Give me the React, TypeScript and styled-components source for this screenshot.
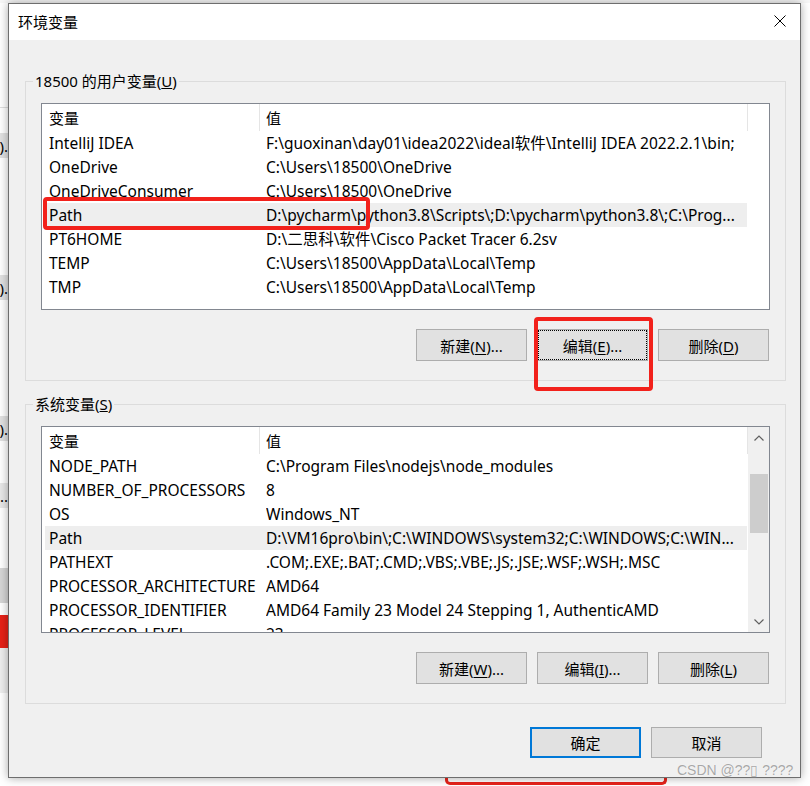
import styled, { createGlobalStyle } from "styled-components";

const GlobalStyle = createGlobalStyle`
  body {
    margin: 0;
    background: #ffffff;
  }
  * {
    box-sizing: border-box;
  }
`;

const uiFont = `"Noto Sans", "Noto Sans CJK SC", sans-serif`;

const Screen = styled.div`
  position: relative;
  width: 810px;
  height: 786px;
  overflow: hidden;
  background: #ffffff;
  display: flex;
  flex-direction: column;
  font-family: ${uiFont};
  font-size: 15px;
  color: #000;
`;

const TopStrip = styled.div`
  height: 3px;
  flex-shrink: 0;
  background: #f7f7f7;
`;

const Middle = styled.div`
  display: flex;
  height: 775px;
  flex-shrink: 0;
`;

const LeftStrip = styled.div`
  width: 8px;
  display: flex;
  flex-direction: column;
  overflow: hidden;
`;

const Band = styled.div<{ $h: number; $bg: string }>`
  height: ${(p) => p.$h}px;
  flex-shrink: 0;
  background: ${(p) => p.$bg};
  display: flex;
  align-items: center;
  justify-content: flex-end;
  white-space: nowrap;
  font-size: 15px;
`;

const RightStrip = styled.div`
  flex: 1;
  background: #ffffff;
`;

const BottomStrip = styled.div`
  height: 8px;
  flex-shrink: 0;
  display: flex;
`;

const RedMark = styled.div`
  margin-left: 445px;
  width: 222px;
  height: 7px;
  border: 3px solid #e8241c;
  border-top: none;
  border-radius: 0 0 5px 5px;
`;

const Dialog = styled.div`
  width: 793px;
  height: 775px;
  border: 1px solid #6e6e6e;
  background: #f0f0f0;
  display: flex;
  flex-direction: column;
  box-shadow: 0 0 9px rgba(0, 0, 0, 0.35);
  position: relative;
  z-index: 1;
`;

const TitleBar = styled.div`
  height: 36px;
  background: #ffffff;
  display: flex;
  align-items: center;
  justify-content: space-between;
  padding: 0 7px 2px 9px;
`;

const Title = styled.span`
  font-size: 15px;
`;

const CloseButton = styled.div`
  width: 26px;
  height: 26px;
  display: flex;
  align-items: center;
  justify-content: center;
`;

const Body = styled.div`
  flex: 1;
  display: flex;
  flex-direction: column;
  padding: 31px 14px 0 16px;
`;

const Group = styled.fieldset<{ $gap?: number }>`
  margin: ${(p) => p.$gap ?? 0}px 0 0 0;
  padding: 12px 15px 19px 15px;
  border: 1px solid #dcdcdc;
  min-width: 0;
  display: flex;
  flex-direction: column;
`;

const Legend = styled.legend`
  margin-left: -8px;
  padding: 0 2px;
  line-height: 20px;
  height: 20px;
  font-size: 15px;
`;

const ListBox = styled.div`
  height: 207px;
  border: 1px solid #828790;
  background: #ffffff;
  display: flex;
  overflow: hidden;
  font-size: 15.5px;
`;

const ListContent = styled.div`
  flex: 1;
  padding-left: 3px;
  overflow: hidden;
`;

const HeaderRow = styled.div`
  display: flex;
  height: 27px;
  align-items: center;
`;

const HeaderCell = styled.div<{ $w?: number; $pad: number }>`
  ${(p) => (p.$w ? `width: ${p.$w}px;` : "flex: 1;")}
  height: 100%;
  display: flex;
  align-items: center;
  padding-left: ${(p) => p.$pad}px;
  border-right: 1px solid #e5e5e5;
  font-size: 15px;
`;

const Row = styled.div<{ $selected?: boolean }>`
  display: flex;
  width: 702px;
  height: 24px;
  line-height: 24px;
  background: ${(p) => (p.$selected ? "#eeeeee" : "transparent")};
  white-space: nowrap;
`;

const NameCell = styled.div`
  width: 221px;
  padding-left: 4px;
  overflow: hidden;
`;

const ValueCell = styled.div`
  flex: 1;
  overflow: hidden;
  text-overflow: ellipsis;
`;

const ScrollBar = styled.div`
  width: 21px;
  background: #f0f0f0;
  display: flex;
  flex-direction: column;
  align-items: center;
`;

const ScrollArrow = styled.div`
  height: 21px;
  width: 100%;
  display: flex;
  align-items: center;
  justify-content: center;
`;

const ScrollTrack = styled.div`
  flex: 1;
  width: 100%;
  display: flex;
  flex-direction: column;
  align-items: center;
`;

const Thumb = styled.div<{ $top: number; $h: number }>`
  margin-top: ${(p) => p.$top}px;
  height: ${(p) => p.$h}px;
  width: 18px;
  background: #cdcdcd;
`;

const ButtonRow = styled.div<{ $top: number; $right?: number }>`
  display: flex;
  justify-content: flex-end;
  gap: 10px;
  margin-top: ${(p) => p.$top}px;
  padding-right: ${(p) => p.$right ?? 0}px;
`;

const Button = styled.div<{ $focused?: boolean; $default?: boolean; $h?: number }>`
  width: 111px;
  height: ${(p) => p.$h ?? 32}px;
  background: #e1e1e1;
  border: ${(p) => (p.$default ? "2px solid #0078d7" : "1px solid #adadad")};
  display: flex;
  align-items: center;
  justify-content: center;
  font-size: 15px;
  ${(p) => (p.$focused ? "outline: 1px dotted #000; outline-offset: -2px;" : "")}
  u {
    text-decoration-thickness: 1px;
    text-underline-offset: 2px;
  }
`;

const Annotation = styled.div<{ $x: number; $y: number; $w: number; $h: number }>`
  position: absolute;
  left: ${(p) => p.$x}px;
  top: ${(p) => p.$y}px;
  width: ${(p) => p.$w}px;
  height: ${(p) => p.$h}px;
  border: 4px solid #f2211b;
  border-radius: 4px;
  z-index: 2;
`;

const Watermark = styled.div`
  position: absolute;
  left: 677px;
  top: 762px;
  z-index: 3;
  font-family: "Liberation Sans", Arial, sans-serif;
  font-size: 14px;
  color: rgba(140, 140, 140, 0.75);
  white-space: nowrap;
  text-shadow: 0 0 1px rgba(255, 255, 255, 0.9);
`;

type Item = [string, string];

const userVars: Item[] = [
  ["IntelliJ IDEA", "F:\\guoxinan\\day01\\idea2022\\ideal软件\\IntelliJ IDEA 2022.2.1\\bin;"],
  ["OneDrive", "C:\\Users\\18500\\OneDrive"],
  ["OneDriveConsumer", "C:\\Users\\18500\\OneDrive"],
  ["Path", "D:\\pycharm\\python3.8\\Scripts\\;D:\\pycharm\\python3.8\\;C:\\Prog..."],
  ["PT6HOME", "D:\\二思科\\软件\\Cisco Packet Tracer 6.2sv"],
  ["TEMP", "C:\\Users\\18500\\AppData\\Local\\Temp"],
  ["TMP", "C:\\Users\\18500\\AppData\\Local\\Temp"],
];

const systemVars: Item[] = [
  ["NODE_PATH", "C:\\Program Files\\nodejs\\node_modules"],
  ["NUMBER_OF_PROCESSORS", "8"],
  ["OS", "Windows_NT"],
  ["Path", "D:\\VM16pro\\bin\\;C:\\WINDOWS\\system32;C:\\WINDOWS;C:\\WIN..."],
  ["PATHEXT", ".COM;.EXE;.BAT;.CMD;.VBS;.VBE;.JS;.JSE;.WSF;.WSH;.MSC"],
  ["PROCESSOR_ARCHITECTURE", "AMD64"],
  ["PROCESSOR_IDENTIFIER", "AMD64 Family 23 Model 24 Stepping 1, AuthenticAMD"],
  ["PROCESSOR_LEVEL", "23"],
];

// the window behind the dialog, only its left edge shows
const leftBands: [number, string, string?][] = [
  [104, "#ffffff"],
  [1, "#dedede"],
  [25, "#ffffff"],
  [25, "#e1e1e1", ")."],
  [117, "#ffffff"],
  [25, "#e1e1e1", ")."],
  [116, "#ffffff"],
  [25, "#e1e1e1", ")."],
  [42, "#ffffff"],
  [25, "#e8e8e8", "..."],
  [60, "#ffffff"],
  [35, "#d6d6d6"],
  [12, "#ffffff"],
  [33, "#e62117"],
  [45, "#eeeeee"],
  [100, "#ffffff"],
];

function Chevron({ up }: { up?: boolean }) {
  return (
    <svg width="10" height="6" viewBox="0 0 10 6">
      <path
        d={up ? "M0.5 5.5 L5 1 L9.5 5.5" : "M0.5 0.5 L5 5 L9.5 0.5"}
        fill="none"
        stroke="#606060"
        strokeWidth="1.2"
      />
    </svg>
  );
}

function VarList({ items, selected, scroll }: { items: Item[]; selected: number; scroll?: boolean }) {
  return (
    <ListBox>
      <ListContent>
        <HeaderRow>
          <HeaderCell $w={215} $pad={4}>变量</HeaderCell>
          <HeaderCell $w={488} $pad={6}>值</HeaderCell>
        </HeaderRow>
        {items.map(([name, value], i) => (
          <Row key={name + i} $selected={i === selected}>
            <NameCell>{name}</NameCell>
            <ValueCell>{value}</ValueCell>
          </Row>
        ))}
      </ListContent>
      {scroll && (
        <ScrollBar>
          <ScrollArrow>
            <Chevron up />
          </ScrollArrow>
          <ScrollTrack>
            <Thumb $top={26} $h={59} />
          </ScrollTrack>
          <ScrollArrow>
            <Chevron />
          </ScrollArrow>
        </ScrollBar>
      )}
    </ListBox>
  );
}

function Accel({ label, k, tail }: { label: string; k: string; tail?: string }) {
  return (
    <span>
      {label}(<u>{k}</u>){tail}
    </span>
  );
}

export default function App() {
  return (
    <>
      <GlobalStyle />
      <Screen>
        <TopStrip />
        <Middle>
          <LeftStrip>
            {leftBands.map(([h, bg, t], i) => (
              <Band key={i} $h={h} $bg={bg}>
                {t}
              </Band>
            ))}
          </LeftStrip>
          <Dialog>
            <TitleBar>
              <Title>环境变量</Title>
              <CloseButton>
                <svg width="12" height="12" viewBox="0 0 12 12">
                  <path d="M0.5 0.5 L11.5 11.5 M11.5 0.5 L0.5 11.5" stroke="#000" strokeWidth="1" />
                </svg>
              </CloseButton>
            </TitleBar>
            <Body>
              <Group>
                <Legend>
                  18500 的用户变量(<u>U</u>)
                </Legend>
                <VarList items={userVars} selected={3} />
                <ButtonRow $top={19} $right={1}>
                  <Button>
                    <Accel label="新建" k="N" tail="..." />
                  </Button>
                  <Button $focused>
                    <Accel label="编辑" k="E" tail="..." />
                  </Button>
                  <Button>
                    <Accel label="删除" k="D" />
                  </Button>
                </ButtonRow>
              </Group>
              <Group $gap={13}>
                <Legend>
                  系统变量(<u>S</u>)
                </Legend>
                <VarList items={systemVars} selected={3} scroll />
                <ButtonRow $top={19} $right={1}>
                  <Button>
                    <Accel label="新建" k="W" tail="..." />
                  </Button>
                  <Button>
                    <Accel label="编辑" k="I" tail="..." />
                  </Button>
                  <Button>
                    <Accel label="删除" k="L" />
                  </Button>
                </ButtonRow>
              </Group>
              <ButtonRow $top={23} $right={24}>
                <Button $default $h={31}>确定</Button>
                <Button $h={31}>取消</Button>
              </ButtonRow>
            </Body>
          </Dialog>
          <RightStrip />
        </Middle>
        <BottomStrip>
          <RedMark />
        </BottomStrip>
        <Annotation $x={43} $y={197} $w={327} $h={33} />
        <Annotation $x={534} $y={317} $w={119} $h={74} />
        <Watermark>CSDN @??▯ ????</Watermark>
      </Screen>
    </>
  );
}
